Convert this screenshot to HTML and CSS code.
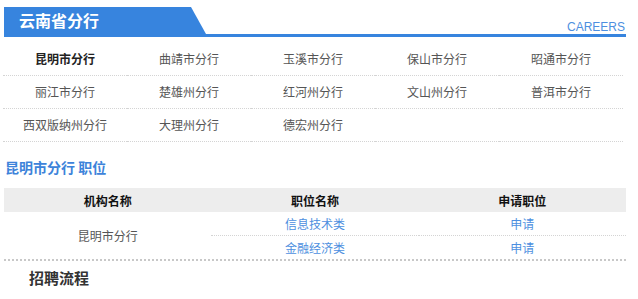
FILE: index.html
```html
<!DOCTYPE html>
<html lang="zh-CN">
<head>
    <meta charset="UTF-8">
    <meta name="viewport" content="width=device-width, initial-scale=1.0">
    <link rel="stylesheet" href="styles.css">
    <title>云南省分行</title>
</head>
<body>
    <div class="wrap">
        <header class="top">
            <h1 class="tab">云南省分行</h1>
            <span class="careers">CAREERS</span>
        </header>

        <ul class="branches">
            <li class="active">昆明市分行</li>
            <li>曲靖市分行</li>
            <li>玉溪市分行</li>
            <li>保山市分行</li>
            <li>昭通市分行</li>
            <li>丽江市分行</li>
            <li>楚雄州分行</li>
            <li>红河州分行</li>
            <li>文山州分行</li>
            <li>普洱市分行</li>
            <li>西双版纳州分行</li>
            <li>大理州分行</li>
            <li>德宏州分行</li>
            <li></li>
            <li></li>
        </ul>

        <h2 class="sub-title">昆明市分行 职位</h2>

        <div class="jobs-box">
            <table class="jobs">
                <thead>
                    <tr>
                        <th>机构名称</th>
                        <th>职位名称</th>
                        <th>申请职位</th>
                    </tr>
                </thead>
                <tbody>
                    <tr>
                        <td rowspan="2" class="org">昆明市分行</td>
                        <td class="sep"><a href="#">信息技术类</a></td>
                        <td class="sep"><a href="#">申请</a></td>
                    </tr>
                    <tr>
                        <td><a href="#">金融经济类</a></td>
                        <td><a href="#">申请</a></td>
                    </tr>
                </tbody>
            </table>
        </div>

        <h3 class="process">招聘流程</h3>
    </div>
</body>
</html>
```

FILE: styles.css
```css
body {
    margin: 0;
    padding: 0;
    font-family: "Noto Sans CJK SC", "Liberation Sans", sans-serif;
    font-size: 12px;
    color: #555;
    background-color: #fff;
}

.wrap {
    width: 622px;
    margin: 7px 0 0 4px;
}

/* 标题栏 */
.top {
    display: flex;
    justify-content: space-between;
    align-items: flex-end;
    height: 27px;
    border-bottom: 3px solid #3784de;
}

.tab {
    margin: 0;
    width: 202px;
    height: 27px;
    padding-left: 15px;
    box-sizing: border-box;
    background-color: #3784de;
    clip-path: polygon(0 0, 187px 0, 202px 100%, 0 100%);
    color: #fff;
    font-size: 16px;
    font-weight: bold;
    line-height: 27px;
}

.careers {
    font-family: "Liberation Sans", Arial, sans-serif;
    font-size: 12px;
    color: #4d8fe0;
    line-height: 14px;
    margin: 0 1px 0 0;
}

/* 分行列表 */
.branches {
    list-style: none;
    margin: 6px 0 0 -1px;
    padding: 0;
    width: 620px;
    display: grid;
    grid-template-columns: repeat(5, 1fr);
}

.branches li {
    height: 32px;
    line-height: 32px;
    text-align: center;
    border-bottom: 1px dotted #d4d4d4;
}

.branches li.active {
    color: #222;
    font-weight: bold;
}

.sub-title {
    margin: 15px 0 0 1px;
    font-size: 14px;
    line-height: 20px;
    color: #3d83da;
}

/* 职位表 */
.jobs-box {
    margin-top: 11px;
    border-bottom: 2px dotted #c8c8c8;
}

.jobs {
    width: 100%;
    border-collapse: collapse;
    table-layout: fixed;
}

.jobs th {
    height: 24px;
    padding: 0;
    background-color: #ededed;
    color: #111;
    font-size: 12px;
    font-weight: bold;
}

.jobs td {
    height: 23px;
    padding: 0;
    text-align: center;
}

.jobs td.sep {
    border-bottom: 1px dotted #d4d4d4;
}

.jobs td.org {
    color: #555;
}

.jobs a {
    color: #4d8fe0;
    text-decoration: none;
}

.process {
    margin: 6px 0 0 25px;
    font-size: 15px;
    line-height: 22px;
    color: #333;
}
```
